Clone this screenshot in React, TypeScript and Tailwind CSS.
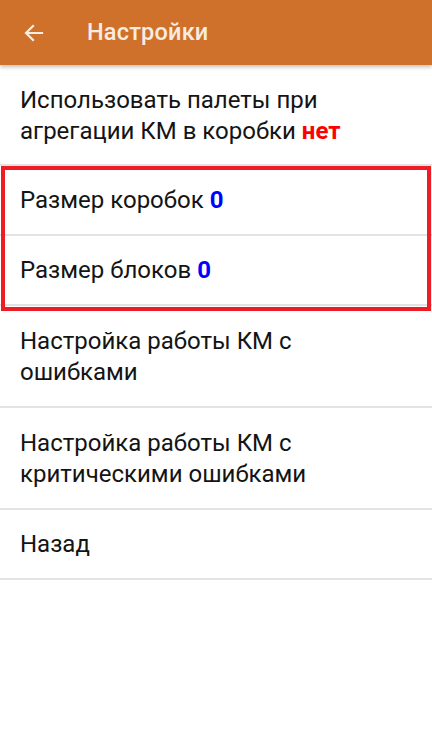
import React from "react";

function Row({ children, two }: { children: React.ReactNode; two?: boolean }) {
  return (
    <div
      className={
        two
          ? "border-b-2 border-[#e3e3e3] px-5 pt-[20px] pb-[18px] text-[24px] leading-[31px] text-[#141414]"
          : "border-b-2 border-[#e3e3e3] px-5 py-[19px] text-[24px] leading-[30px] text-[#141414]"
      }
    >
      {children}
    </div>
  );
}

export default function App() {
  return (
    <div
      className="w-[432px] h-[738px] bg-white overflow-hidden"
      style={{ fontFamily: "Roboto, 'Noto Sans', sans-serif" }}
    >
      <div className="relative z-10 h-[65px] bg-[#cf712a] flex items-center shadow-[0_2px_4px_rgba(0,0,0,0.25)]">
        <div className="w-[87px] flex items-center pl-[22px]">
          <svg width="24" height="24" viewBox="0 0 24 24" fill="none">
            <path
              d="M20 12H4.5M11 5l-7 7 7 7"
              stroke="#fbeee4"
              strokeWidth="2.2"
              strokeLinecap="square"
            />
          </svg>
        </div>
        <span className="text-[23.5px] font-medium text-[#f8ece2] tracking-[0.2px]">Настройки</span>
      </div>
      <div className="border-b-2 border-[#e3e3e3] px-5 pt-[20px] pb-[17px] text-[24px] leading-[31px] text-[#141414]">
        Использовать палеты при
        <br />
        агрегации КМ в коробки <span className="font-bold text-[#ff0000]">нет</span>
      </div>
      <div className="relative">
        <Row>
          Размер коробок <span className="font-bold text-[#0000ff]">0</span>
        </Row>
        <Row>
          Размер блоков <span className="font-bold text-[#0000ff]">0</span>
        </Row>
        <div className="absolute left-[1px] right-[1px] top-0 bottom-[-5px] border-4 border-[#ee1c25] pointer-events-none" />
      </div>
      <Row two>
        Настройка работы КМ с
        <br />
        ошибками
      </Row>
      <Row two>
        Настройка работы КМ с
        <br />
        критическими ошибками
      </Row>
      <Row>Назад</Row>
    </div>
  );
}
